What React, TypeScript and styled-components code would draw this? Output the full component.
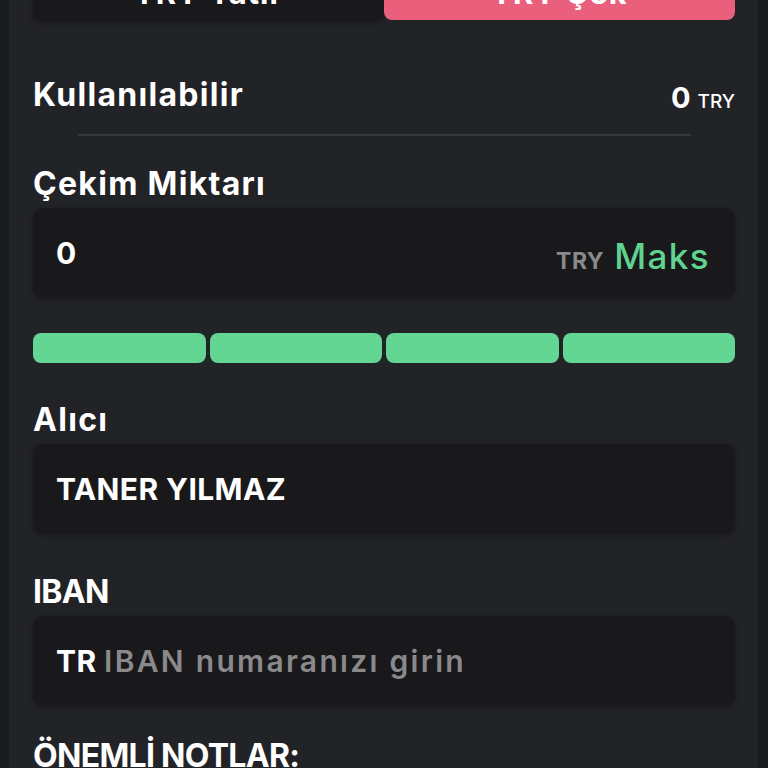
import React from 'react';
import styled, { createGlobalStyle } from 'styled-components';

const GlobalStyle = createGlobalStyle`
  html, body {
    margin: 0;
    padding: 0;
    background: #1a1b1d;
    overflow: hidden;
  }
`;

const font = `Inter, "Noto Sans", "DejaVu Sans", sans-serif`;

const Panel = styled.div`
  margin: 0 10px 0 9px;
  height: 768px;
  background: #222327;
  padding: 0 23px 0 24px;
  box-sizing: border-box;
  font-family: ${font};
  color: #ffffff;
  overflow: hidden;
`;

const Tabs = styled.div`
  display: grid;
  grid-template-columns: 1fr 1fr;
  margin-top: -36px;
  height: 56px;
`;

const Tab = styled.div<{ $active?: boolean }>`
  display: flex;
  align-items: center;
  justify-content: center;
  border-radius: 8px;
  font-size: 31px;
  font-weight: 700;
  letter-spacing: 1px;
  background: ${(p) => (p.$active ? '#ea5f7c' : '#19191b')};
  box-shadow: ${(p) => (p.$active ? 'none' : '0 2px 6px rgba(0,0,0,0.35)')};
`;

const BalanceRow = styled.div`
  display: flex;
  align-items: center;
  justify-content: space-between;
  height: 40px;
  margin-top: 57px;
`;

const Label = styled.div<{ $gap: number; $caps?: boolean }>`
  height: 40px;
  line-height: 40px;
  font-size: 32px;
  font-weight: 700;
  letter-spacing: ${(p) => (p.$caps ? '-0.7px' : '1.3px')};
  margin-top: ${(p) => p.$gap}px;
  margin-bottom: 4px;
  white-space: nowrap;
`;

const Amount = styled.div`
  display: flex;
  align-items: baseline;
  gap: 7px;
`;

const AmountValue = styled.span`
  font-size: 29px;
  font-weight: 700;
`;

const AmountUnit = styled.span`
  font-size: 19px;
  font-weight: 500;
`;

const Divider = styled.div`
  height: 2px;
  background: #37383c;
  margin: 17px 44px 0 45px;
`;

const Field = styled.div`
  display: flex;
  align-items: center;
  height: 90px;
  padding: 0 25px 0 23px;
  background: #19191b;
  border-radius: 10px;
  box-shadow: 0 2px 6px rgba(0, 0, 0, 0.25);
  font-size: 30px;
  font-weight: 700;
  letter-spacing: 0.4px;
  white-space: nowrap;
`;

const FieldValue = styled.span`
  flex: 1;
`;

const Muted = styled.span`
  color: #8a8a8c;
  font-weight: 600;
  letter-spacing: 2.3px;
`;

const Suffix = styled.span`
  display: flex;
  align-items: baseline;
  gap: 10px;
  padding-top: 5px;
`;

const Unit = styled.span`
  color: #8a8a8c;
  font-size: 23px;
  font-weight: 700;
  letter-spacing: 0.5px;
`;

const MaxButton = styled.span`
  color: #5fd38f;
  font-size: 35px;
  font-weight: 500;
  letter-spacing: 1.4px;
`;

const Presets = styled.div`
  display: grid;
  grid-template-columns: repeat(4, 1fr);
  gap: 4px;
  margin-top: 35px;
  height: 30px;
`;

const Preset = styled.div`
  background: #63d693;
  border-radius: 8px;
`;

export default function App() {
  return (
    <>
      <GlobalStyle />
      <Panel>
        <Tabs>
          <Tab>TRY Yatır</Tab>
          <Tab $active>TRY Çek</Tab>
        </Tabs>
        <BalanceRow>
          <Label $gap={0}>Kullanılabilir</Label>
          <Amount>
            <AmountValue>0</AmountValue>
            <AmountUnit>TRY</AmountUnit>
          </Amount>
        </BalanceRow>
        <Divider />
        <Label $gap={28}>Çekim Miktarı</Label>
        <Field>
          <FieldValue>0</FieldValue>
          <Suffix>
            <Unit>TRY</Unit>
            <MaxButton>Maks</MaxButton>
          </Suffix>
        </Field>
        <Presets>
          <Preset />
          <Preset />
          <Preset />
          <Preset />
        </Presets>
        <Label $gap={37}>Alıcı</Label>
        <Field>
          <FieldValue>TANER YILMAZ</FieldValue>
        </Field>
        <Label $gap={38} $caps>
          IBAN
        </Label>
        <Field>
          <FieldValue>
            TR <Muted>IBAN numaranızı girin</Muted>
          </FieldValue>
        </Field>
        <Label $gap={30} $caps>
          ÖNEMLİ NOTLAR:
        </Label>
      </Panel>
    </>
  );
}
